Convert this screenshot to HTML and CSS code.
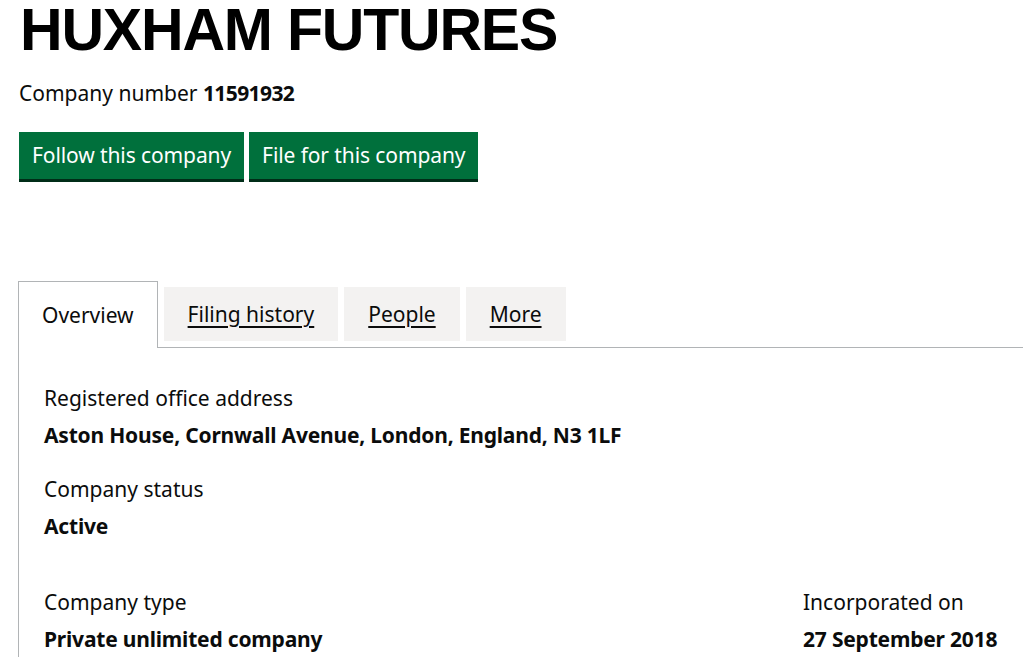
FILE: index.html
```html
<!DOCTYPE html>
<html lang="en">
<head>
<meta charset="utf-8">
<title>HUXHAM FUTURES</title>
<link rel="stylesheet" href="styles.css">
</head>
<body>
<main class="page">
  <h1 class="company-name">HUXHAM FUTURES</h1>
  <p class="company-number">Company number <strong>11591932</strong></p>
  <div class="actions">
    <a class="button" href="#">Follow this company</a>
    <a class="button" href="#">File for this company</a>
  </div>
  <div class="tabs">
    <ul class="tab-list">
      <li class="tab tab-selected"><span>Overview</span></li>
      <li class="tab"><a href="#">Filing history</a></li>
      <li class="tab"><a href="#">People</a></li>
      <li class="tab"><a href="#">More</a></li>
    </ul>
    <div class="panel">
      <dl class="field">
        <dt>Registered office address</dt>
        <dd>Aston House, Cornwall Avenue, London, England, N3 1LF</dd>
      </dl>
      <dl class="field">
        <dt>Company status</dt>
        <dd>Active</dd>
      </dl>
      <div class="field-row">
        <dl class="field">
          <dt>Company type</dt>
          <dd>Private unlimited company</dd>
        </dl>
        <dl class="field">
          <dt>Incorporated on</dt>
          <dd>27 September 2018</dd>
        </dl>
      </div>
    </div>
  </div>
</main>
</body>
</html>
```

FILE: styles.css
```css
html, body {
  margin: 0;
  padding: 0;
  background: #ffffff;
  color: #0b0c0c;
}
body {
  font-family: "Noto Sans", "Liberation Sans", sans-serif;
  font-size: 21px;
}
.page {
  padding-left: 18px;
}
.company-name {
  margin: 0 0 0 2px;
  padding-top: 1px;
  font-family: "Liberation Sans", Arial, sans-serif;
  font-weight: 700;
  font-size: 59px;
  line-height: 59px;
  letter-spacing: -1.2px;
  color: #000;
}
.company-number {
  margin: 21px 0 0 1px;
  line-height: 25px;
}
.company-number strong {
  font-weight: 700;
  letter-spacing: -0.6px;
}
.actions {
  display: flex;
  gap: 5px;
  margin: 26px 0 0 1px;
}
.button {
  display: inline-block;
  background: #00703c;
  color: #fff;
  text-decoration: none;
  height: 47px;
  line-height: 47px;
  padding: 0 13px;
  letter-spacing: -0.1px;
  box-shadow: 0 3px 0 #002d18;
}
.tabs {
  margin-top: 102px;
}
.tab-list {
  list-style: none;
  display: flex;
  margin: 0;
  padding: 0;
  align-items: flex-start;
  gap: 6px;
}
.tab {
  background: #f3f2f1;
  margin-top: 6px;
  height: 54px;
  line-height: 54px;
  padding: 0 24px;
}
.tab a {
  color: #0b0c0c;
  text-decoration: underline;
  text-underline-offset: 4px;
  text-decoration-thickness: 2px;
}
.tab-selected {
  background: #fff;
  margin-top: 0;
  height: 66px;
  line-height: 66px;
  border: 1px solid #b1b4b6;
  border-bottom: none;
  padding: 0 23px;
  margin-bottom: -1px;
  position: relative;
  z-index: 1;
}
.panel {
  border-top: 1px solid #b1b4b6;
  border-left: 1px solid #b1b4b6;
  padding: 38px 0 0 25px;
  height: 300px;
}
.field {
  margin: 0 0 29px;
}
.field dt {
  line-height: 25px;
}
.field dd {
  margin: 12px 0 0;
  font-weight: 700;
  line-height: 25px;
  letter-spacing: -0.2px;
}
.field-row {
  display: grid;
  grid-template-columns: 759px auto;
  padding-top: 22px;
}
```
